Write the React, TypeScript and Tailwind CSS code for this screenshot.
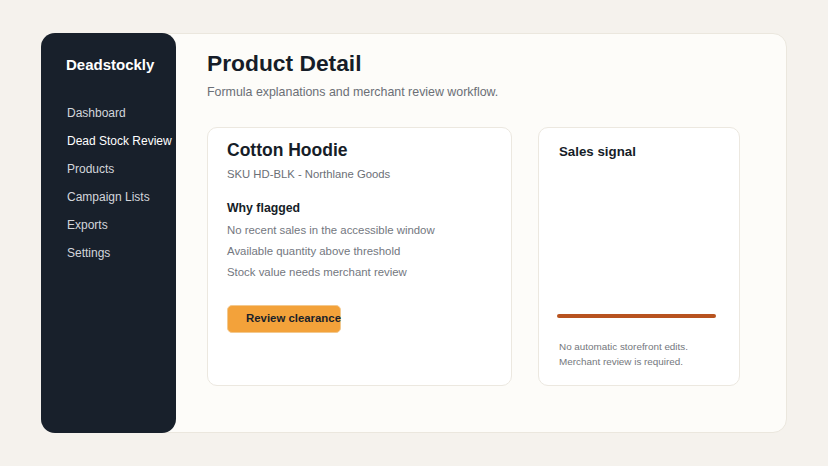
const navItems = [
  "Dashboard",
  "Dead Stock Review",
  "Products",
  "Campaign Lists",
  "Exports",
  "Settings",
]

const reasons = [
  "No recent sales in the accessible window",
  "Available quantity above threshold",
  "Stock value needs merchant review",
]

export default function App() {
  return (
    <div className="flex h-[466px] w-full items-center justify-center bg-[#f5f2ed] font-['Liberation_Sans',Arial,sans-serif]">
      <div className="flex h-[400px] w-[746px] rounded-[14px] border border-[#ebe7de] bg-[#fdfcf9]">
        <aside className="-m-px w-[135px] shrink-0 rounded-[14px] bg-[#18202b] pt-[22px] pl-[25px]">
          <div className="text-[15px] leading-5 font-bold text-white">Deadstockly</div>
          <nav className="mt-6 flex flex-col">
            {navItems.map((item) => (
              <a
                key={item}
                className={
                  item === "Dead Stock Review"
                    ? "pl-px text-[12px] leading-7 whitespace-nowrap text-white"
                    : "pl-px text-[12px] leading-7 whitespace-nowrap text-[#d3d6dc]"
                }
              >
                {item}
              </a>
            ))}
          </nav>
        </aside>

        <main className="flex-1 pt-[13px] pl-[32px]">
          <h1 className="text-[22.8px] leading-8 font-bold text-[#161d28]">Product Detail</h1>
          <p className="mt-[3px] text-[12.4px] leading-5 text-[#6b6f76]">
            Formula explanations and merchant review workflow.
          </p>

          <div className="mt-[25px] flex gap-[26px]">
            <section className="h-[259px] w-[305px] rounded-[10px] border border-[#ece8e0] bg-white px-[19px] pt-[10px]">
              <h2 className="text-[17.5px] leading-6 font-bold text-[#161d28]">Cotton Hoodie</h2>
              <p className="mt-1 text-[11.3px] leading-4 text-[#6b6f76]">
                SKU HD-BLK - Northlane Goods
              </p>
              <h3 className="mt-[17px] text-[12.3px] leading-[18px] font-bold text-[#161d28]">
                Why flagged
              </h3>
              <ul className="mt-[3px]">
                {reasons.map((r) => (
                  <li key={r} className="text-[11.4px] leading-[21px] text-[#737780]">
                    {r}
                  </li>
                ))}
              </ul>
              <button className="mt-[22px] flex h-7 w-[114px] items-center rounded-[5px] border border-[#f3c98f] bg-[#f3a23a] pl-[18px] text-[11.4px] font-bold whitespace-nowrap text-[#1a1f29]">
                Review clearance
              </button>
            </section>

            <section className="h-[259px] w-[202px] rounded-[10px] border border-[#ece8e0] bg-white px-5 pt-[15px]">
              <h2 className="text-[13.3px] leading-[18px] font-bold text-[#161d28]">Sales signal</h2>
              <div className="mt-[153px] -ml-[2px] h-1 w-[159px] rounded-full bg-[#b8531f]" />
              <div className="mt-[21px] text-[9.9px] leading-[15px] text-[#74777d]">
                <p>No automatic storefront edits.</p>
                <p>Merchant review is required.</p>
              </div>
            </section>
          </div>
        </main>
      </div>
    </div>
  )
}
